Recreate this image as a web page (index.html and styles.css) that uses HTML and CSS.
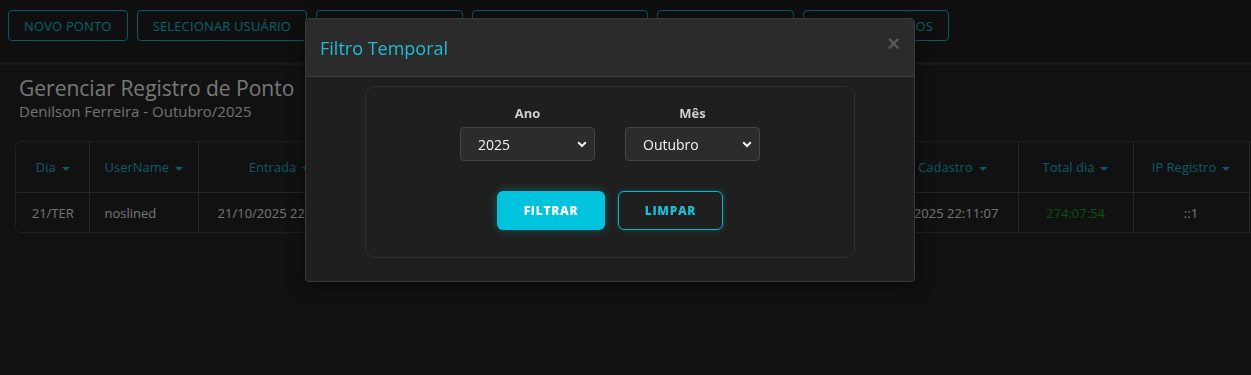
FILE: index.html
```html
<!DOCTYPE html>
<html lang="pt-BR">
<head>
    <meta charset="UTF-8">
    <meta name="viewport" content="width=device-width, initial-scale=1.0">
    <title>Gerenciar Registro de Ponto</title>
    <link rel="stylesheet" href="styles.css">
</head>
<body>
    <nav class="toolbar">
        <button class="tool-btn">Novo Ponto</button>
        <button class="tool-btn">Selecionar Usuário</button>
        <button class="tool-btn">Filtro Temporal</button>
        <button class="tool-btn">Gerenciar Registros</button>
        <button class="tool-btn">Imprimir Folha</button>
        <button class="tool-btn">Exportar Dados</button>
    </nav>

    <main class="content">
        <h1 class="page-title">Gerenciar Registro de Ponto</h1>
        <p class="page-sub">Denilson Ferreira - Outubro/2025</p>

        <div class="table-wrap">
            <table class="ponto-table">
                <colgroup>
                    <col style="width: 72px">
                    <col style="width: 109px">
                    <col style="width: 163px">
                    <col style="width: 163px">
                    <col style="width: 168px">
                    <col style="width: 163px">
                    <col style="width: 163px">
                    <col style="width: 115px">
                    <col style="width: 116px">
                </colgroup>
                <thead>
                    <tr>
                        <th>Dia<span class="caret"></span></th>
                        <th class="left">UserName<span class="caret"></span></th>
                        <th>Entrada<span class="caret"></span></th>
                        <th>Saída<span class="caret"></span></th>
                        <th>Intervalo<span class="caret"></span></th>
                        <th>Observação<span class="caret"></span></th>
                        <th>Data Cadastro<span class="caret"></span></th>
                        <th>Total dia<span class="caret"></span></th>
                        <th>IP Registro<span class="caret"></span></th>
                    </tr>
                </thead>
                <tbody>
                    <tr>
                        <td>21/TER</td>
                        <td class="left">noslined</td>
                        <td>21/10/2025 22:11:07</td>
                        <td>-</td>
                        <td>-</td>
                        <td>-</td>
                        <td>21/10/2025 22:11:07</td>
                        <td class="total">274:07:54</td>
                        <td>::1</td>
                    </tr>
                </tbody>
            </table>
        </div>
    </main>

    <div class="backdrop"></div>

    <div class="modal">
        <div class="modal-header">
            <h2 class="modal-title">Filtro Temporal</h2>
            <button class="modal-close">&times;</button>
        </div>
        <div class="modal-body">
            <div class="filter-card">
                <div class="filter-fields">
                    <div class="field">
                        <label for="ano">Ano</label>
                        <div class="select-box">
                            <select id="ano">
                                <option>2025</option>
                                <option>2024</option>
                            </select>
                            <svg class="chevron" width="10" height="7" viewBox="0 0 10 7"><path d="M1.2 1.3 L5 5 L8.8 1.3" fill="none" stroke="#f2f2f2" stroke-width="2"/></svg>
                        </div>
                    </div>
                    <div class="field">
                        <label for="mes">Mês</label>
                        <div class="select-box">
                            <select id="mes">
                                <option>Outubro</option>
                                <option>Novembro</option>
                            </select>
                            <svg class="chevron" width="10" height="7" viewBox="0 0 10 7"><path d="M1.2 1.3 L5 5 L8.8 1.3" fill="none" stroke="#f2f2f2" stroke-width="2"/></svg>
                        </div>
                    </div>
                </div>
                <div class="filter-actions">
                    <button class="btn-filtrar">Filtrar</button>
                    <button class="btn-limpar">Limpar</button>
                </div>
            </div>
        </div>
    </div>
</body>
</html>
```

FILE: styles.css
```css
body {
    margin: 0;
    font-family: "Open Sans", "Liberation Sans", sans-serif;
    background-color: #1e1e1e;
    color: #ececec;
}

.toolbar {
    display: flex;
    gap: 9px;
    padding: 10px 8px 0 8px;
    height: 52px;
    border-bottom: 3px solid #303030;
}

.tool-btn {
    height: 31px;
    padding: 0 15px;
    font-family: inherit;
    font-size: 13px;
    letter-spacing: 0.15px;
    text-transform: uppercase;
    color: #15c0d8;
    background: transparent;
    border: 1px solid #17b2c8;
    border-radius: 4px;
}

.content {
    background-color: #222;
    padding: 11px 0 30px 0;
    min-height: 280px;
}

.page-title {
    margin: 0 0 0 19px;
    font-size: 21px;
    font-weight: 400;
    line-height: 25px;
    color: #ececec;
}

.page-sub {
    margin: 1px 0 0 19px;
    font-size: 15px;
    line-height: 19px;
    color: #e0e0e0;
}

.table-wrap {
    margin: 20px 0 0 15px;
    width: 1250px;
    border: 1px solid #3c3c3c;
    border-radius: 6px;
    overflow: hidden;
}

.ponto-table {
    border-collapse: collapse;
    table-layout: fixed;
    width: 1232px;
    margin-left: 1px;
    font-size: 13px;
}

.ponto-table th,
.ponto-table td {
    border: 1px solid #4c4c4c;
    text-align: center;
    white-space: nowrap;
    overflow: hidden;
}

.ponto-table tr > :first-child {
    border-left: none;
}

.ponto-table thead tr:first-child th {
    border-top: none;
}

.ponto-table tbody tr:last-child td {
    border-bottom: none;
}

.ponto-table th {
    height: 48px;
    font-weight: 400;
    color: #14b4cc;
}

.ponto-table td {
    height: 37px;
    color: #e6e6e6;
}

.ponto-table .left {
    text-align: left;
    padding-left: 15px;
}

.caret {
    display: inline-block;
    margin-left: 6px;
    vertical-align: middle;
    border-top: 4px solid #14b4cc;
    border-left: 4px solid transparent;
    border-right: 4px solid transparent;
}

.ponto-table .total {
    color: #16a416;
}

.backdrop {
    position: fixed;
    inset: 0;
    background: rgba(0, 0, 0, 0.5);
}

.modal {
    position: fixed;
    top: 18px;
    left: 305px;
    width: 608px;
    border: 1px solid #3a3a3a;
    border-radius: 4px;
    background-color: #1f1f1f;
    box-shadow: 0 4px 16px rgba(0, 0, 0, 0.5);
    overflow: hidden;
}

.modal-header {
    display: flex;
    align-items: center;
    justify-content: space-between;
    height: 57px;
    padding: 0 14px;
    background-color: #2b2b2b;
    border-bottom: 1px solid #3c3c3c;
}

.modal-title {
    margin: 0;
    font-size: 18px;
    font-weight: 400;
    color: #1fbcd6;
}

.modal-close {
    padding: 0;
    margin-top: -8px;
    font-family: "Liberation Sans", sans-serif;
    font-size: 22px;
    font-weight: 700;
    line-height: 1;
    color: #595959;
    background: none;
    border: none;
}

.modal-body {
    padding: 9px 0 23px 0;
}

.filter-card {
    width: 488px;
    margin: 0 auto;
    padding: 17px 0 27px 0;
    border: 1px solid #2f2f2f;
    border-radius: 10px;
}

.filter-fields {
    display: flex;
    justify-content: center;
    gap: 30px;
}

.field {
    display: flex;
    flex-direction: column;
    align-items: center;
    gap: 5px;
}

.field label {
    font-size: 13px;
    font-weight: 700;
    color: #cfcfcf;
}

.select-box {
    position: relative;
}

.select-box select {
    appearance: none;
    width: 135px;
    height: 34px;
    padding: 0 0 0 17px;
    font-family: inherit;
    font-size: 14px;
    color: #f2f2f2;
    background-color: #2c2c2c;
    border: 1px solid #454545;
    border-radius: 4px;
}

.chevron {
    position: absolute;
    right: 8px;
    top: 14px;
    pointer-events: none;
}

.filter-actions {
    display: flex;
    justify-content: center;
    gap: 13px;
    margin-top: 30px;
}

.btn-filtrar,
.btn-limpar {
    height: 39px;
    font-family: inherit;
    font-size: 12px;
    font-weight: 800;
    letter-spacing: 0.7px;
    text-transform: uppercase;
    border-radius: 6px;
}

.btn-filtrar {
    width: 108px;
    color: #fff;
    background-color: #00c3dd;
    border: none;
    box-shadow: 0 0 8px rgba(0, 195, 221, 0.35);
}

.btn-limpar {
    width: 105px;
    color: #1cbcd4;
    background: transparent;
    border: 1px solid #12b4cc;
    box-shadow: 0 0 5px rgba(0, 195, 221, 0.3);
}
```
